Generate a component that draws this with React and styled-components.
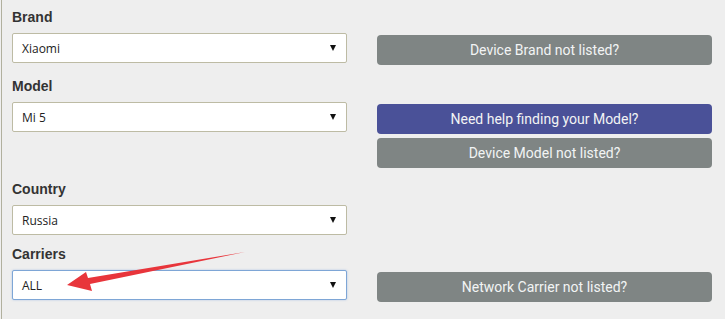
import React from 'react'
import styled, { createGlobalStyle } from 'styled-components'

const Global = createGlobalStyle`
  body {
    margin: 0;
    background: #efefef;
    font-family: "Liberation Sans", Arial, sans-serif;
  }
`

const Panel = styled.div`
  position: relative;
  width: 711px;
  margin-left: 1px;
  padding: 0 9px 20px 10px;
  background: #eeeeee;
  border-left: 1px solid #b1b09e;
  border-right: 1px solid #b1b09e;
`

const Row = styled.div`
  display: grid;
  grid-template-columns: 335px 335px;
  column-gap: 30px;
  align-items: start;
  padding-top: ${p => p.$gap}px;
`

const Group = styled.div`
  display: flex;
  flex-direction: column;
`

const Label = styled.div`
  font-size: 14px;
  font-weight: bold;
  line-height: 20px;
  color: #333;
  margin-bottom: 6px;
`

const Select = styled.div`
  box-sizing: border-box;
  height: 30px;
  display: flex;
  align-items: center;
  justify-content: space-between;
  padding: 0 9px 0 9px;
  background: #fff;
  border: 1px solid ${p => (p.$focus ? '#7ea6d6' : '#bdbba4')};
  border-radius: 2px;
  box-shadow: ${p => (p.$focus ? '0 0 2px rgba(100,150,220,0.5)' : 'none')};
  font-family: "Open Sans", "Noto Sans", sans-serif;
  font-size: 12px;
  color: #222;
`

const Caret = styled.span`
  width: 0;
  height: 0;
  border-left: 3.5px solid transparent;
  border-right: 3.5px solid transparent;
  border-top: 6px solid #111;
  margin-right: 1px;
`

const Actions = styled.div`
  display: flex;
  flex-direction: column;
  gap: 4px;
  padding-top: 28px;
`

const Button = styled.div`
  height: 30px;
  display: flex;
  align-items: center;
  justify-content: center;
  border-radius: 4px;
  background: ${p => (p.$primary ? '#4a5198' : '#7f8584')};
  color: #f2f4f4;
  font-family: Roboto, "Liberation Sans", sans-serif;
  font-size: 14px;
`

const Overlay = styled.svg`
  position: absolute;
  left: -1px;
  top: 0;
  pointer-events: none;
`

const Field = ({ label, value, focus }) => (
  <Group>
    <Label>{label}</Label>
    <Select $focus={focus}>
      <span>{value}</span>
      <Caret />
    </Select>
  </Group>
)

export default function App() {
  return (
    <>
      <Global />
      <Panel>
        <Row $gap={7}>
          <Field label="Brand" value="Xiaomi" />
          <Actions>
            <Button>Device Brand not listed?</Button>
          </Actions>
        </Row>
        <Row $gap={11}>
          <Field label="Model" value="Mi 5" />
          <Actions>
            <Button $primary>Need help finding your Model?</Button>
            <Button>Device Model not listed?</Button>
          </Actions>
        </Row>
        <Row $gap={11}>
          <Field label="Country" value="Russia" />
        </Row>
        <Row $gap={9}>
          <Field label="Carriers" value="ALL" focus />
          <Actions>
            <Button>Network Carrier not listed?</Button>
          </Actions>
        </Row>
        <Overlay width="725" height="319" viewBox="0 0 725 319">
          <polygon
            points="66,285 85,272 87,278 244,252 89,284 91,291"
            fill="#e8353b"
          />
        </Overlay>
      </Panel>
    </>
  )
}
